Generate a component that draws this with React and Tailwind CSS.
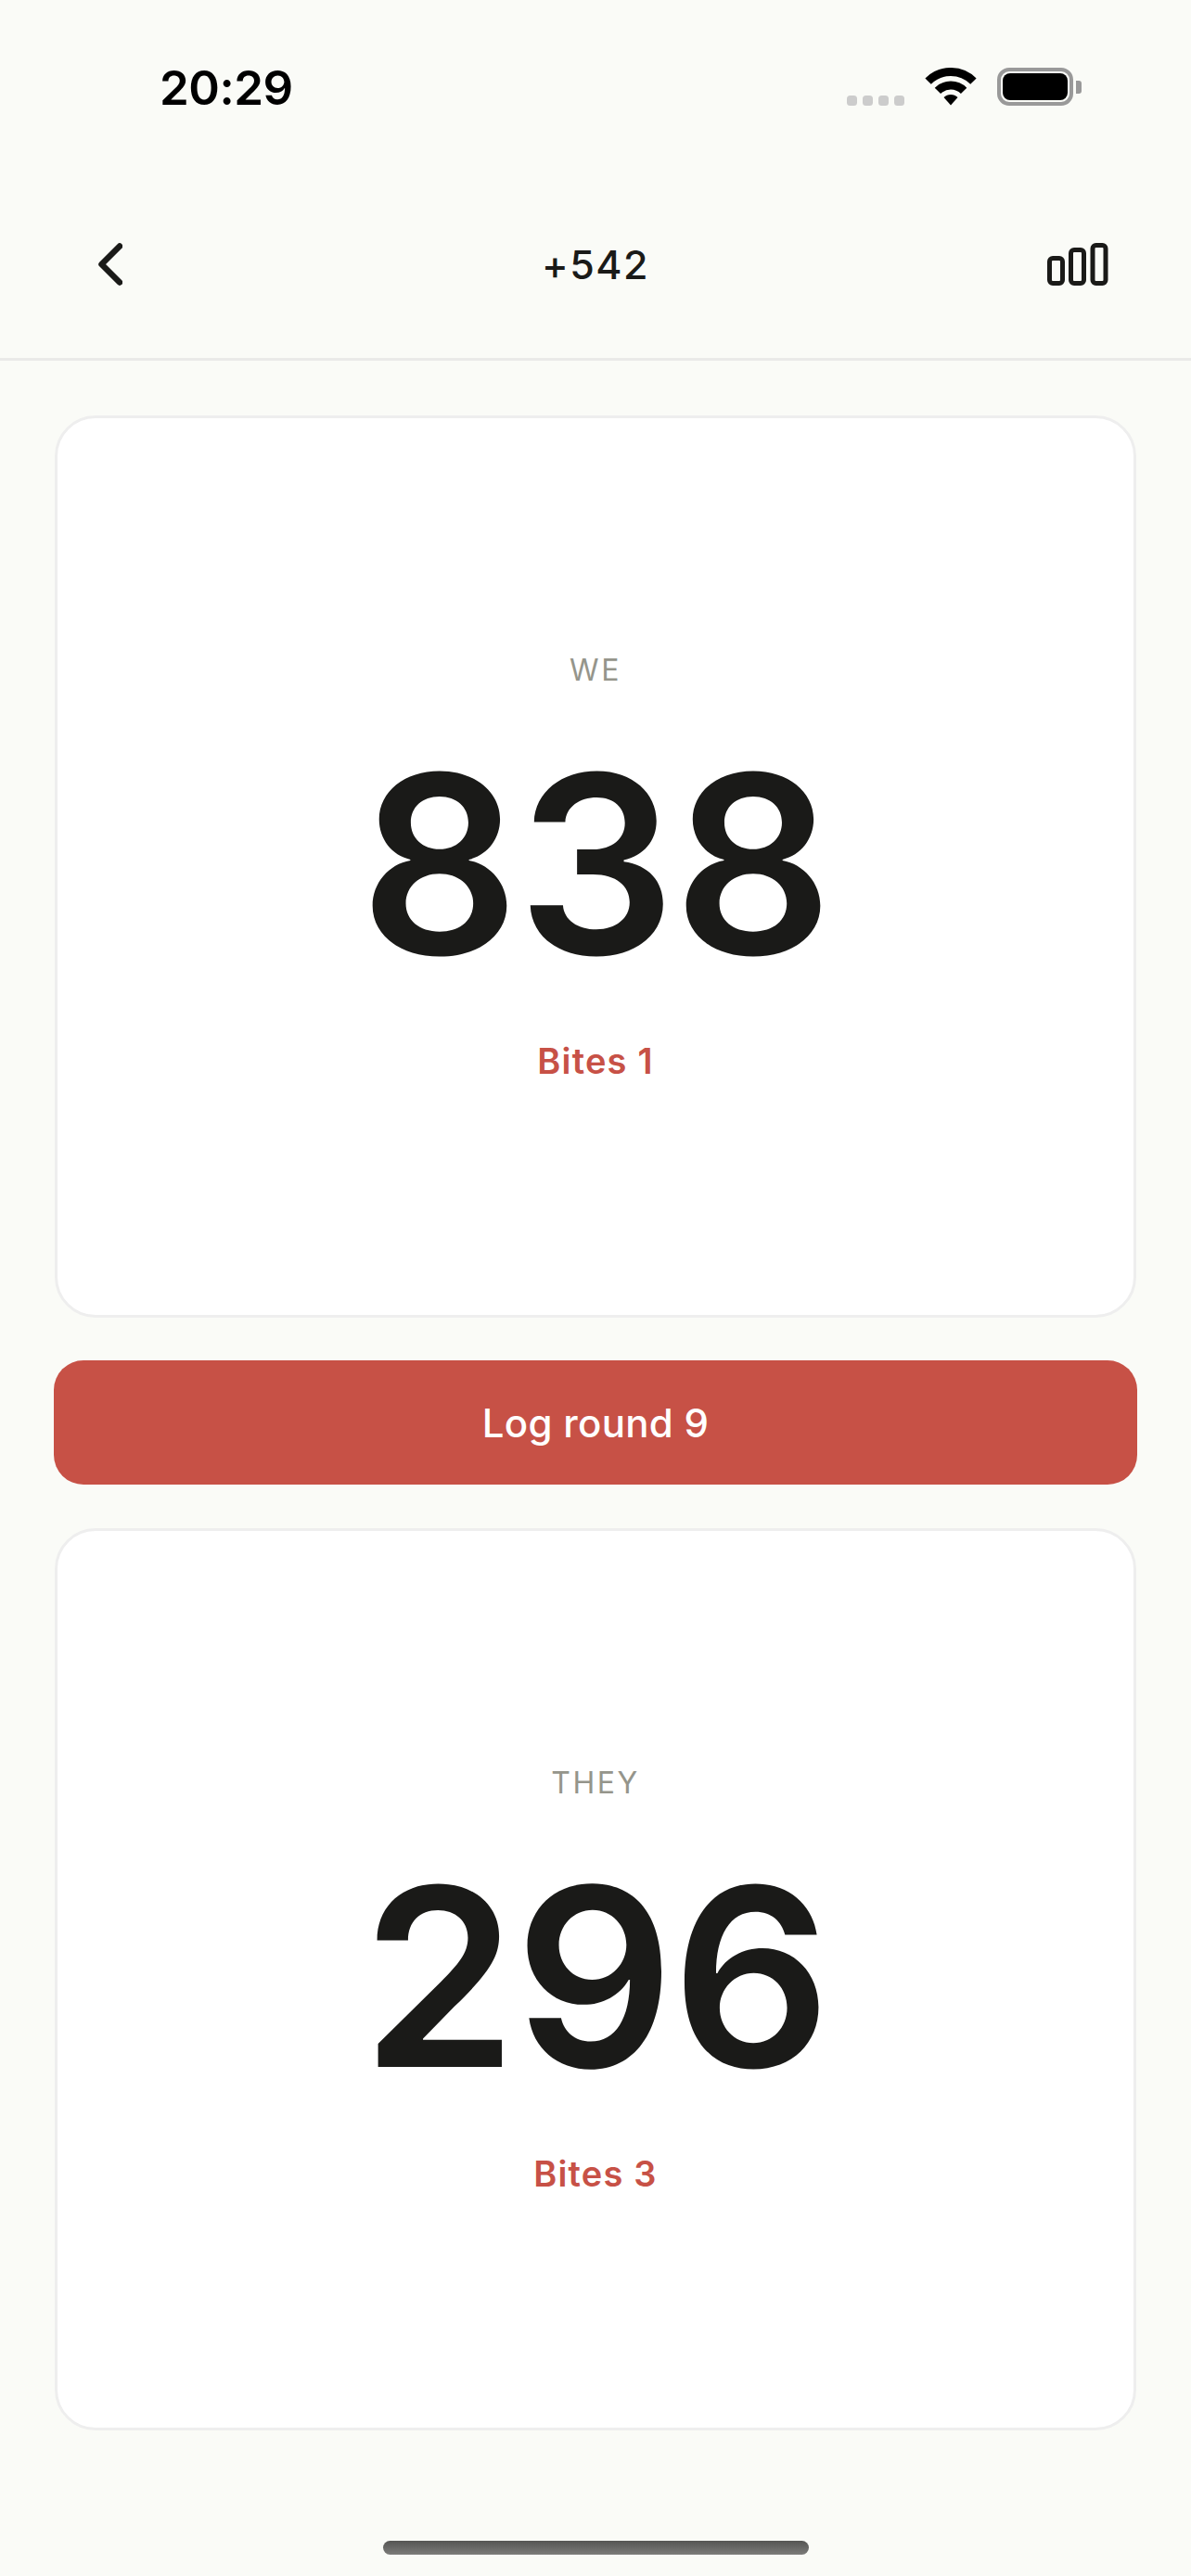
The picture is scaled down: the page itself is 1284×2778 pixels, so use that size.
import React from 'react';

function StatusIcons() {
  return (
    <div className="flex items-start">
      {/* signal placeholder dots */}
      <div className="mt-[30px] flex gap-[6px]">
        <span className="h-[11px] w-[11px] rounded-[3.5px] bg-[#cccccc]"></span>
        <span className="h-[11px] w-[11px] rounded-[3.5px] bg-[#cccccc]"></span>
        <span className="h-[11px] w-[11px] rounded-[3.5px] bg-[#cccccc]"></span>
        <span className="h-[11px] w-[11px] rounded-[3.5px] bg-[#cccccc]"></span>
      </div>
      <svg className="ml-[22px]" width="56" height="41" viewBox="0 0 56 41" fill="none">
        <path d="M3.6 14.6a34.5 34.5 0 0 1 48.8 0" stroke="#000" strokeWidth="9" />
        <path d="M13.9 24.9a20 20 0 0 1 28.2 0" stroke="#000" strokeWidth="9" />
        <path d="M28 40.5 20.5 32a10.6 10.6 0 0 1 15 0Z" fill="#000" />
      </svg>
      <div className="ml-[22px] flex items-center">
        <div className="flex h-[41px] w-[82px] items-center justify-center rounded-[13px] border-[4px] border-[#999999]">
          <div className="h-[29px] w-[70px] rounded-[8px] bg-black"></div>
        </div>
        <div className="ml-[3px] h-[14px] w-[6px] rounded-r-[3px] bg-[#999999]"></div>
      </div>
    </div>
  );
}

function ScoreCard({ label, score, bites }) {
  return (
    <div className="flex h-[973px] flex-col items-center justify-center rounded-[44px] border-[3px] border-[#eeeeee] bg-white">
      <p className="text-[32px] leading-[40px] font-normal tracking-[2.5px] text-[#95958b]">{label}</p>
      <p className="mt-[53px] text-[268px] leading-[272px] font-semibold tracking-[-2px] text-[#1a1a18]">{score}</p>
      <p className="mt-[54px] text-[38px] leading-[44px] font-semibold tracking-[1.2px] text-[#c75146]">{bites}</p>
    </div>
  );
}

export default function App() {
  return (
    <div className="flex h-[2778px] flex-col bg-[#fafbf7] font-['Inter',sans-serif]">
      {/* Status bar */}
      <div className="flex h-[220px] items-start justify-between pt-[65px] pr-[118px] pl-[172px]">
        <span className="text-[51px] leading-[60px] font-semibold tracking-[-0.5px] text-black">20:29</span>
        <div className="pt-[8px]">
          <StatusIcons />
        </div>
      </div>

      {/* Nav header */}
      <div className="flex h-[169px] items-start justify-between border-b-[3px] border-[#eaeae8] pt-[42px] pr-[89px] pl-[106px]">
        <div className="w-[49px]">
          <svg width="26" height="46" viewBox="0 0 26 46" fill="none">
            <path d="M23 3.5 3.5 23 23 42.5" stroke="#1a1a18" strokeWidth="6.5" strokeLinecap="round" strokeLinejoin="round" />
          </svg>
        </div>
        <span className="text-[43px] leading-[46px] font-medium tracking-[1.5px] text-[#1a1a18]">+542</span>
        <svg width="66" height="46" viewBox="0 0 66 46" fill="none" stroke="#1a1a18" strokeWidth="5">
          <rect x="2.5" y="16.5" width="14" height="27" rx="3.5" />
          <rect x="25.5" y="7.5" width="14" height="36" rx="3.5" />
          <rect x="49" y="2.5" width="14" height="41" rx="3.5" />
        </svg>
      </div>

      {/* Scores */}
      <div className="flex flex-col px-[59px] pt-[59px]">
        <ScoreCard label="WE" score="838" bites="Bites 1" />
        <button className="-mx-[1px] mt-[46px] mb-[47px] h-[134px] rounded-[32px] bg-[#c75146] text-[42px] font-medium tracking-[0.3px] text-white">
          Log round 9
        </button>
        <ScoreCard label="THEY" score="296" bites="Bites 3" />
      </div>

      {/* Home indicator */}
      <div className="mt-[119px] flex justify-center">
        <div className="h-[15px] w-[459px] rounded-full bg-gradient-to-b from-[#555553] to-[#7c7c7a]"></div>
      </div>
    </div>
  );
}
